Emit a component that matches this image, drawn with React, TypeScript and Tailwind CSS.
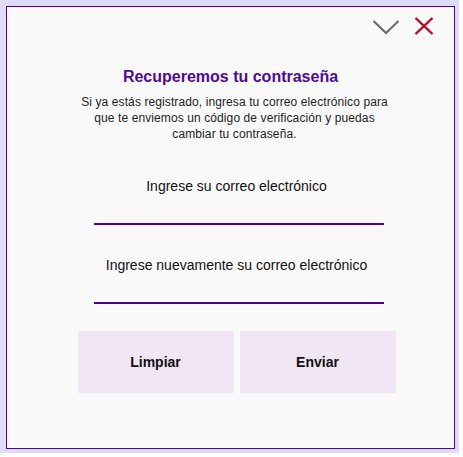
import React, { useState } from 'react';

const font = { fontFamily: '"Liberation Sans", Arial, sans-serif' };

export default function App() {
  const [email, setEmail] = useState('');
  const [email2, setEmail2] = useState('');

  const clear = () => {
    setEmail('');
    setEmail2('');
  };

  return (
    <div className="w-[463px] h-[457px] bg-white" style={font}>
      <div className="w-[459px] h-[453px] bg-[#dedcf8] pl-[6px] pt-[6px] pr-[4px] pb-[4px]">
        <div className="w-full h-full border border-[#5000a0] bg-[#f9f9f9] flex flex-col">
          {/* header icons */}
          <div className="flex justify-end items-start gap-[14px] pt-[10px] pr-[20px] h-[26px]">
            <button className="w-[28px] h-[16px] mt-[2px] flex items-center justify-center">
              <svg width="28" height="16" viewBox="0 0 28 16" fill="none">
                <path d="M1.5 2 L14 14 L26.5 2" stroke="#6a6a6a" strokeWidth="2" />
              </svg>
            </button>
            <button className="w-[20px] h-[18px] flex items-center justify-center">
              <svg width="20" height="18" viewBox="0 0 20 18" fill="none">
                <path d="M1.5 1 L18.5 17 M18.5 1 L1.5 17" stroke="#c8001e" strokeWidth="2.4" />
              </svg>
            </button>
          </div>

          <h1 className="mt-[34px] text-center text-[16px] leading-[20px] font-bold text-[#4f0a9c]">
            Recuperemos tu contraseña
          </h1>

          <div className="pl-[8px] mt-[7px] flex justify-center">
            <p className="w-[318px] text-center text-[12px] leading-[16px] tracking-[0.1px] text-[#1e1e1e]">
              Si ya estás registrado, ingresa tu correo electrónico para que te enviemos un código de
              verificación y puedas cambiar tu contraseña.
            </p>
          </div>

          <div className="pl-[12px] flex flex-col items-center">
            <label className="mt-[35px] text-[14px] leading-[18px] text-[#111]">
              Ingrese su correo electrónico
            </label>
            <input
              type="email"
              value={email}
              onChange={(e) => setEmail(e.target.value)}
              className="ml-[4px] w-[290px] h-[30px] bg-transparent border-b-2 border-[#4b0096] outline-none text-[14px] text-center"
            />

            <label className="mt-[31px] text-[14px] leading-[18px] text-[#111]">
              Ingrese nuevamente su correo electrónico
            </label>
            <input
              type="email"
              value={email2}
              onChange={(e) => setEmail2(e.target.value)}
              className="ml-[4px] w-[290px] h-[30px] bg-transparent border-b-2 border-[#4b0096] outline-none text-[14px] text-center"
            />

            <div className="mt-[27px] flex gap-[6px]">
              <button
                onClick={clear}
                className="w-[156px] h-[62px] bg-[#f0e6f4] text-[14px] font-bold text-[#111]"
              >
                Limpiar
              </button>
              <button className="w-[156px] h-[62px] bg-[#f0e6f4] text-[14px] font-bold text-[#111]">
                Enviar
              </button>
            </div>
          </div>
        </div>
      </div>
    </div>
  );
}
